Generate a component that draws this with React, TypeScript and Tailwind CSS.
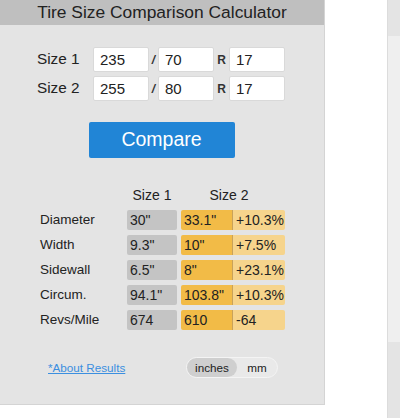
import { useState } from 'react'

interface Row {
  label: string
  a: string
  b: string
  diff: string
}

const rows: Row[] = [
  { label: 'Diameter', a: '30"', b: '33.1"', diff: '+10.3%' },
  { label: 'Width', a: '9.3"', b: '10"', diff: '+7.5%' },
  { label: 'Sidewall', a: '6.5"', b: '8"', diff: '+23.1%' },
  { label: 'Circum.', a: '94.1"', b: '103.8"', diff: '+10.3%' },
  { label: 'Revs/Mile', a: '674', b: '610', diff: '-64' },
]

function SizeInput({ value }: { value: string }) {
  return (
    <input
      defaultValue={value}
      className="w-[56px] h-[25px] px-[6px] bg-white border border-[#d9d9d9] rounded-[2px] text-[15px] text-[#222] outline-none"
    />
  )
}

function SizeRow({ label, width, ratio, rim }: { label: string; width: string; ratio: string; rim: string }) {
  return (
    <div className="flex items-center h-[25px]">
      <span className="w-[56px] text-[15.3px] text-[#222]">{label}</span>
      <SizeInput value={width} />
      <span className="w-[9px] text-center text-[12px] font-bold italic text-[#333]">/</span>
      <SizeInput value={ratio} />
      <span className="w-[15px] text-center text-[12px] font-bold text-[#333]">R</span>
      <SizeInput value={rim} />
    </div>
  )
}

export default function App() {
  const [unit, setUnit] = useState<'inches' | 'mm'>('inches')

  return (
    <div className="w-[400px] h-[418px] bg-white flex font-['Liberation_Sans',Arial,sans-serif] overflow-hidden">
      {/* Calculator panel */}
      <div className="w-[325px] h-[405px] bg-[#e4e4e4] border-r border-b border-[#d4d4d4] flex flex-col">
        <div className="h-[25px] bg-[#bfbfbf] text-center text-[17.4px] leading-[25px] text-[#222]">
          Tire Size Comparison Calculator
        </div>

        <div className="pl-[37px] pt-[22px] flex flex-col gap-[4px]">
          <SizeRow label="Size 1" width="235" ratio="70" rim="17" />
          <SizeRow label="Size 2" width="255" ratio="80" rim="17" />
        </div>

        <div className="flex justify-center pt-[21px] pr-[1px]">
          <button className="w-[146px] h-[36px] bg-[#2185d6] rounded-[2px] text-white text-[19.5px]">
            Compare
          </button>
        </div>

        {/* Results */}
        <div className="pl-[40px] pt-[29px]">
          <div className="flex text-[14px] text-[#222] h-[17px] leading-[17px]">
            <span className="w-[87px]" />
            <span className="w-[50px] text-center">Size 1</span>
            <span className="w-[4px]" />
            <span className="w-[96px] text-center">Size 2</span>
          </div>
          <div className="flex flex-col gap-[5px] mt-[6px]">
            {rows.map((r) => (
              <div key={r.label} className="flex items-center h-[20px] text-[14px] text-[#222]">
                <span className="w-[87px] text-[13.5px]">{r.label}</span>
                <span className="w-[50px] h-[20px] leading-[20px] pl-[3px] bg-[#c4c4c4] rounded-[2px]">{r.a}</span>
                <span className="w-[4px]" />
                <div className="flex h-[20px] leading-[20px] rounded-[2px] overflow-hidden">
                  <span className="w-[52px] pl-[3px] bg-[#f2bb47] border-r border-[#c9a25a]">{r.b}</span>
                  <span className="w-[52px] pl-[3px] bg-[#f6d48c]">{r.diff}</span>
                </div>
              </div>
            ))}
          </div>
        </div>

        <div className="flex items-center mt-[27px] pl-[48px]">
          <a href="#" className="text-[11.7px] text-[#3b8fe0] underline w-[138px]">
            *About Results
          </a>
          <div className="flex items-center h-[21px] w-[92px] rounded-full bg-[#e9e9e9] border border-[#f4f4f4] text-[11.7px] text-[#222]">
            <button
              onClick={() => setUnit('inches')}
              className={`h-[19px] w-[50px] rounded-full ${unit === 'inches' ? 'bg-[#cfcfcf]' : ''}`}
            >
              inches
            </button>
            <button
              onClick={() => setUnit('mm')}
              className={`h-[19px] w-[40px] rounded-full ${unit === 'mm' ? 'bg-[#cfcfcf]' : ''}`}
            >
              mm
            </button>
          </div>
        </div>
      </div>

      <div className="w-[62px]" />

      {/* Neighbouring sidebar edge */}
      <div className="w-[13px] border-l border-[#dcdcdc] flex flex-col">
        <div className="h-[36px] bg-[#e4e4e4]" />
        <div className="h-[306px] bg-[#efefef]" />
        <div className="flex-1 bg-[#e4e4e4]" />
      </div>
    </div>
  )
}
